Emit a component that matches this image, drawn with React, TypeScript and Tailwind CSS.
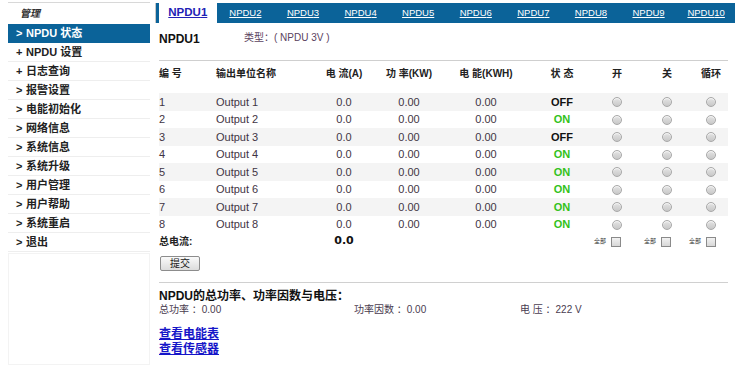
import React from "react";

const font = { fontFamily: '"Liberation Sans", "Noto Sans CJK SC", sans-serif' };

const menu = [
  { p: ">", t: "NPDU 状态", active: true },
  { p: "+", t: "NPDU 设置" },
  { p: "+", t: "日志查询" },
  { p: ">", t: "报警设置" },
  { p: ">", t: "电能初始化" },
  { p: ">", t: "网络信息" },
  { p: ">", t: "系统信息" },
  { p: ">", t: "系统升级" },
  { p: ">", t: "用户管理" },
  { p: ">", t: "用户帮助" },
  { p: ">", t: "系统重启" },
  { p: ">", t: "退出" },
];

const states = ["OFF", "ON", "OFF", "ON", "ON", "ON", "ON", "ON"];

function Radio() {
  return (
    <span className="inline-block w-[10px] h-[10px] rounded-full border border-[#a8a8a8] bg-gradient-to-b from-[#e4e4e4] to-[#c8c8c8] shadow-[inset_0_1px_1px_rgba(255,255,255,0.8)]" />
  );
}

function Check() {
  return (
    <span className="inline-block w-[10px] h-[10px] border border-[#8a8a8a] bg-gradient-to-b from-[#f2f2f2] to-[#d8d8d8]" />
  );
}

const cols = "grid grid-cols-[57px_96px_64px_66px_88px_64px_46px_54px_34px] items-center";

export default function App() {
  return (
    <div className="w-[735px] h-[365px] bg-white text-[11px] text-[#3f3444] overflow-hidden flex" style={font}>
      {/* Sidebar */}
      <div className="w-[142px] ml-[8px] mt-[2px] flex flex-col border-t border-[#d8d8d8]">
        <div className="h-[21px] flex items-center pl-[12px] italic font-bold text-[10px] text-[#333]">管理</div>
        {menu.map((m, i) => (
          <div
            key={i}
            className={
              "h-[19px] flex items-center pl-[8px] font-bold text-[11px] border-b " +
              (m.active ? "bg-[#0b6399] text-white border-[#0b6399]" : "text-[#222] border-[#eeeeee]")
            }
          >
            <span className="w-[10px]">{m.p}</span>
            <span>{m.t}</span>
          </div>
        ))}
        <div className="flex-1 mt-[1px] border border-[#f3f3f3]" />
      </div>

      {/* Main */}
      <div className="ml-[5px] flex-1 flex flex-col pt-[3px]">
        <div className="h-[20px] bg-[#0b6399] flex pl-[3px] border-l border-[#c8c8c8]">
          {Array.from({ length: 10 }).map((_, i) => (
            <div
              key={i}
              className={
                "flex-1 flex items-center justify-center underline " +
                (i === 0 ? "bg-white text-[#2121b5] font-bold text-[11.5px]" : "text-white text-[9.5px]")
              }
            >
              NPDU{i + 1}
            </div>
          ))}
        </div>

        <div className="pl-[4px] pr-[7px] flex flex-col">
          <div className="h-[32px] flex items-center">
            <span className="font-bold text-[12px] text-[#111] w-[85px]">NPDU1</span>
            <span className="text-[10px] text-[#5b4260] -mt-[4px]">类型：( NPDU 3V )</span>
          </div>
          <div className="h-px bg-[#cfcfcf] mt-[5px]" />

          <div className={cols + " h-[24px] font-bold text-[10px] text-[#222]"}>
            <span>编 号</span>
            <span>输出单位名称</span>
            <span className="text-center">电 流(A)</span>
            <span className="text-center">功 率(KW)</span>
            <span className="text-center">电 能(KWH)</span>
            <span className="text-center">状 态</span>
            <span className="text-center">开</span>
            <span className="text-center">关</span>
            <span className="text-center">循环</span>
          </div>

          <div className="mt-[8px] flex flex-col">
            {states.map((s, i) => (
              <div key={i} className={cols + (i % 2 === 0 ? " h-[18px] bg-[#f4f4f4]" : " h-[17px] bg-white")}>
                <span>{i + 1}</span>
                <span>Output {i + 1}</span>
                <span className="text-center">0.0</span>
                <span className="text-center">0.00</span>
                <span className="text-center">0.00</span>
                <span className={"text-center font-bold " + (s === "ON" ? "text-[#33c21a]" : "text-[#111]")}>{s}</span>
                <span className="flex justify-center"><Radio /></span>
                <span className="flex justify-center"><Radio /></span>
                <span className="flex justify-center"><Radio /></span>
              </div>
            ))}
            <div className={cols + " h-[17px]"}>
              <span className="col-span-2 font-bold text-[10px] text-[#222]">总电流:</span>
              <span className="text-center font-bold text-[#111]" style={{ fontFamily: '"DejaVu Sans", sans-serif', fontSize: 11 }}>0.0</span>
              <span />
              <span />
              <span />
              <span className="flex items-center gap-[5px]"><span className="text-[6px] text-[#333]">全部</span><Check /></span>
              <span className="flex items-center gap-[5px] ml-[4px]"><span className="text-[6px] text-[#333]">全部</span><Check /></span>
              <span className="flex items-center gap-[5px] -ml-[5px]"><span className="text-[6px] text-[#333]">全部</span><Check /></span>
            </div>
          </div>

          <div className="mt-[6px]">
            <button className="w-[40px] h-[15px] ml-[1px] border border-[#8c8c8c] rounded-[2px] bg-gradient-to-b from-[#fafafa] to-[#dcdcdc] text-[10px] text-[#222] leading-none flex items-center justify-center">
              提交
            </button>
          </div>

          <div className="h-px bg-[#d0d0d0] mt-[11px]" />

          <div className="mt-[6px] font-bold text-[12px] text-[#111] leading-[14px]">NPDU的总功率、功率因数与电压：</div>
          <div className="flex text-[10px] leading-[14px] text-[#4a3c50]">
            <span className="w-[195px]">总功率 ：0.00</span>
            <span className="w-[166px]">功率因数 ：0.00</span>
            <span>电 压 ：222 V</span>
          </div>

          <div className="mt-[10px] flex flex-col font-bold text-[12px] leading-[15px]">
            <a className="underline text-[#1515c8] w-fit">查看电能表</a>
            <a className="underline text-[#1515c8] w-fit">查看传感器</a>
          </div>
        </div>
      </div>
    </div>
  );
}
